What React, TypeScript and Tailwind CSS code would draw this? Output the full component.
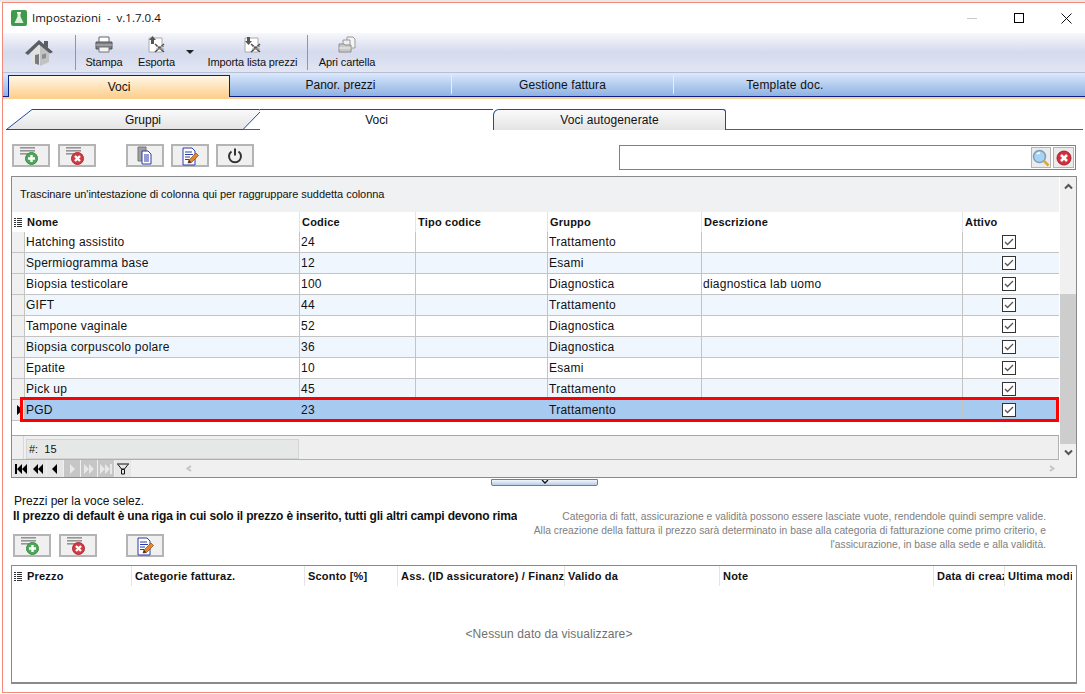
import React from "react";

const font = "font-['Liberation_Sans',Arial,sans-serif]";

const Lines = () => (
  <g fill="#959595">
    <rect x="1" y="1" width="15" height="1.600" />
    <rect x="1" y="4" width="15" height="1.600" />
    <rect x="1" y="7" width="10" height="1.600" />
  </g>
);
const AddIcon = () => (
  <svg width="24" height="20" viewBox="0 0 24 20">
    <Lines />
    <circle cx="12.500" cy="12.500" r="6" fill="#4ea85a" stroke="#3a8a46" />
    <path d="M12.500 9v7M9 12.500h7" stroke="#fff" strokeWidth="2.400" />
  </svg>
);
const DelIcon = () => (
  <svg width="24" height="20" viewBox="0 0 24 20">
    <Lines />
    <circle cx="12.500" cy="12.500" r="6" fill="#d23a44" stroke="#b02a34" />
    <path d="M10 10l5 5M15 10l-5 5" stroke="#fff" strokeWidth="2.400" />
  </svg>
);
const CopyIcon = () => (
  <svg width="20" height="20" viewBox="0 0 20 20">
    <path d="M3 1h8v14H3z" fill="#a0a0a0" stroke="#777" />
    <path d="M7 5h6l3 3v10H7z" fill="#fff" stroke="#2a3aa8" />
    <path d="M9 9h5M9 11h5M9 13h5M9 15h5" stroke="#2a3aa8" />
  </svg>
);
const EditIcon = () => (
  <svg width="20" height="20" viewBox="0 0 20 20">
    <path d="M3 2h9l3 3v14H3z" fill="#fff" stroke="#2a3aa8" />
    <path d="M5 6h7M5 8.500h8M5 11h5M5 13.500h4" stroke="#2a3aa8" />
    <path d="M8 17l1-3 7-7 2.500 2.500-7 7z" fill="#e8842c" stroke="#8a4a12" strokeWidth=".7" />
    <path d="M8 17l1-3 2.500 2.500z" fill="#333" />
  </svg>
);
const PowerIcon = () => (
  <svg width="20" height="20" viewBox="0 0 20 20" fill="none">
    <path d="M6.500 5.500a6 6 0 1 0 7 0" stroke="#333" strokeWidth="2" />
    <path d="M10 2.500v7" stroke="#333" strokeWidth="2" />
  </svg>
);
const HomeIcon = () => (
  <svg width="30" height="30" viewBox="0 0 30 30">
    <path d="M7 13l9-7 9 7v11l-9 4-9-4z" fill="#e2e2e2" />
    <path d="M16 6l9 7v11l-9 4z" fill="#c2c2c2" />
    <path d="M1 15L15 2l14 12-3 1.500L15 6.500 4 17z" fill="#5a5e63" />
    <path d="M20 3h4v7l-4-3z" fill="#5a5e63" />
    <path d="M11 17l4-1v11l-4-1.500z" fill="#777b80" />
    <path d="M18 16.500l4-1v4.500l-4 1z" fill="#8a8e94" />
  </svg>
);
const PrintIcon = () => (
  <svg width="18" height="18" viewBox="0 0 18 18">
    <path d="M4 1h10v6H4z" fill="#fff" stroke="#666" />
    <path d="M1 6h16v7H1z" fill="#7c7f85" stroke="#555" />
    <path d="M1 9h16" stroke="#bbb" />
    <path d="M4 11h10v5H4z" fill="#f4f4f4" stroke="#777" />
  </svg>
);
const XlsIcon = ({ down }: { down?: boolean }) => (
  <svg width="18" height="18" viewBox="0 0 18 18">
    <path d="M1 2h13v14H1z" fill="#fff" stroke="#aaa" />
    <path d={down ? "M3 1h3v4h2L4.500 9 1 5h2z" : "M4.500 0L8 4H6v4H3V4H1z"} fill="#555" />
    <path d="M7 8l9 8M16 8l-9 8" stroke="#555" strokeWidth="1.600" />
    <path d="M8 13h8M8 10.500h8" stroke="#999" />
  </svg>
);
const FolderIcon = () => (
  <svg width="18" height="18" viewBox="0 0 18 18">
    <path d="M9 1h6l2 2v9H9z" fill="#f4f4f4" stroke="#999" />
    <path d="M5 4h7v9H5z" fill="#eee" stroke="#999" />
    <path d="M1 8h5l1 1h6v7H1z" fill="#c9c9c9" stroke="#8c8c8c" />
    <path d="M1 12h12" stroke="#efefef" />
  </svg>
);
const SearchIcon = () => (
  <svg width="18" height="18" viewBox="0 0 18 18">
    <circle cx="7.500" cy="7.500" r="6" fill="#a9d3f5" stroke="#7f9db5" strokeWidth="1.500" />
    <path d="M5 5a3.500 3.500 0 0 1 3-1" stroke="#fff" fill="none" strokeWidth="1.500" />
    <path d="M12 12l4.500 4.500" stroke="#d8a83c" strokeWidth="2.500" />
  </svg>
);
const RedX = () => (
  <svg width="16" height="16" viewBox="0 0 16 16">
    <circle cx="8" cy="8" r="7" fill="#d2303c" stroke="#a5222c" />
    <path d="M5 5l6 6M11 5l-6 6" stroke="#fff" strokeWidth="2.600" />
  </svg>
);
const Chev = ({ d, c = "#555" }: { d: string; c?: string }) => (
  <svg width="9" height="7" viewBox="0 0 9 7" fill="none">
    <path d={d} stroke={c} strokeWidth="2" />
  </svg>
);
const Check = () => (
  <div className="w-[14px] h-[14px] border border-[#333] bg-white flex items-center justify-center">
    <svg width="12" height="12" viewBox="0 0 12 12" fill="none">
      <path d="M2 6l2.500 2.500L10 3" stroke="#555" strokeWidth="1.300" />
    </svg>
  </div>
);
const ColIcon = () => (
  <svg width="8" height="9" viewBox="0 0 8 9" fill="#333">
    <path d="M0 0h2v1H0zM3 0h5v1H3zM0 2h2v1H0zM3 2h5v1H3zM0 4h2v1H0zM3 4h5v1H3zM0 6h2v1H0zM3 6h5v1H3zM0 8h2v1H0zM3 8h5v1H3z" />
  </svg>
);

const Btn = ({ children, className = "" }: { children: React.ReactNode; className?: string }) => (
  <div className={`w-[38px] h-[23px] border-2 border-[#b4b4b4] bg-[#f0f0f0] flex items-center justify-center shrink-0 ${className}`}>
    {children}
  </div>
);

const ToolItem = ({ icon, label, className = "" }: { icon: React.ReactNode; label: string; className?: string }) => (
  <div className={`flex flex-col items-center h-full pt-[3px] ${className}`}>
    <div className="h-[18px] flex items-center justify-center">{icon}</div>
    <div className="text-[11px] tracking-[-0.12px] leading-[13px] mt-[2px] text-[#111] whitespace-nowrap">{label}</div>
  </div>
);

const rows = [
  ["Hatching assistito", "24", "Trattamento", ""],
  ["Spermiogramma base", "12", "Esami", ""],
  ["Biopsia testicolare", "100", "Diagnostica", "diagnostica lab uomo"],
  ["GIFT", "44", "Trattamento", ""],
  ["Tampone vaginale", "52", "Diagnostica", ""],
  ["Biopsia corpuscolo polare", "36", "Diagnostica", ""],
  ["Epatite", "10", "Esami", ""],
  ["Pick up", "45", "Trattamento", ""],
  ["PGD", "23", "Trattamento", ""],
];

const cols = "grid grid-cols-[12px_275px_116px_132px_154px_261px_97px]";

const NavBtn = ({ d, on }: { d: string; on?: boolean }) => (
  <div className={`w-[16px] h-full ml-px flex items-center justify-center ${on ? "bg-[#e6e6e6]" : "bg-[#c6c6c6]"}`}>
    <svg width="12" height="10" viewBox="0 0 12 10" fill={on ? "#000" : "#e8e8e8"}>
      <path d={d} />
    </svg>
  </div>
);

export default function App() {
  return (
    <div className={`${font} w-[1085px] h-[694px] bg-white overflow-hidden text-[#111]`}>
      <div className="h-[2px] bg-[#e8e8e8]" />
      <div className="ml-[2px] h-[691px] border-t border-l border-b border-[#f48a7c] bg-white flex flex-col">
        {/* title bar */}
        <div className="h-[30px] shrink-0 flex items-center pl-[8px]">
          <svg width="16" height="16" viewBox="0 0 16 16">
            <rect width="16" height="16" rx="2" fill="#3f9a4b" />
            <path d="M6.500 3h3v3.500L12.500 13h-9L6.500 6.500z" fill="#dff0df" />
            <path d="M6 2h4v1.500H6z" fill="#fff" />
          </svg>
          <span className="ml-[5px] text-[11.500px] font-['Open_Sans',sans-serif] whitespace-pre">Impostazioni  -  v.1.7.0.4</span>
          <div className="ml-auto flex items-center pr-[13px] gap-[37px]">
            <div className="w-[10px] h-px bg-[#c8c8c8]" />
            <div className="w-[10px] h-[10px] border border-black" />
            <svg width="11" height="11" viewBox="0 0 11 11" stroke="#111" fill="none">
              <path d="M.5.5l10 10M10.500.5l-10 10" />
            </svg>
          </div>
        </div>
        {/* toolbar */}
        <div className="h-[40px] shrink-0 border-b border-[#b8bfd6] bg-gradient-to-b from-[#f7f8fc] via-[#d5daed] to-[#e2e6f3] flex items-stretch">
          <div className="w-[72px] flex items-center justify-center">
            <HomeIcon />
          </div>
          <div className="w-px my-[2px] bg-[#8f96a6]" />
          <ToolItem icon={<PrintIcon />} label="Stampa" className="w-[36px] ml-[10px]" />
          <ToolItem icon={<XlsIcon />} label="Esporta" className="w-[37px] ml-[16px]" />
          <div className="ml-[11px] mt-[17px] w-0 h-0 border-x-[4px] border-x-transparent border-t-[4px] border-t-[#222]" />
          <ToolItem icon={<XlsIcon down />} label="Importa lista prezzi" className="w-[91px] ml-[13px]" />
          <div className="w-px my-[2px] ml-[9px] bg-[#8f96a6]" />
          <ToolItem icon={<FolderIcon />} label="Apri cartella" className="w-[58px] ml-[10px]" />
        </div>
        {/* main tabs */}
        <div className="h-[26px] shrink-0 border-b-2 border-[#fbd18f] bg-white">
          <div className="h-full pl-[5px] border-b border-[#0a1f8a] bg-gradient-to-b from-[#dbe9fc] to-[#8fb2e2] flex items-stretch text-[12px]">
            <div className="w-[222px] mt-[2px] -mb-px border-x border-t border-[#0a1f8a] bg-gradient-to-b from-[#fff7e6] to-[#fdd08f] flex items-center justify-center">Voci</div>
            <div className="w-[222px] flex items-center justify-center border-r border-[#e4eefc] my-[2px]">Panor. prezzi</div>
            <div className="w-[222px] flex items-center justify-center border-r border-[#e4eefc] my-[2px] tracking-[0.1px]">Gestione fattura</div>
            <div className="w-[222px] flex items-center justify-center tracking-[0.2px]">Template doc.</div>
          </div>
        </div>
        {/* sub tabs */}
        <div className="mt-[10px] h-[21px] shrink-0 ml-[3px] mr-[2px] border-b border-[#3a5ea8] flex text-[12px]">
          <div className="w-[254px] relative flex items-center justify-center -mb-px">
            <svg className="absolute inset-0" width="256" height="21" viewBox="0 0 256 21">
              <defs>
                <linearGradient id="g" x1="0" y1="0" x2="0" y2="1">
                  <stop offset="0" stopColor="#fafafa" />
                  <stop offset="1" stopColor="#e4e4e4" />
                </linearGradient>
              </defs>
              <path d="M.5 20.500L26 .5h227l2 1.500L237 20.500z" fill="url(#g)" stroke="#1e4aa0" />
            </svg>
            <span className="relative pl-[20px]">Gruppi</span>
          </div>
          <div className="w-[233px] relative flex items-center justify-center -mb-px bg-white border-t border-[#1e4aa0]">Voci</div>
          <div className="w-[233px] -mb-px border-x border-t border-[#1e4aa0] rounded-tr-[3px] rounded-tl-[6px] bg-gradient-to-b from-[#fafafa] to-[#e4e4e4] flex items-center justify-center tracking-[0.1px]">Voci autogenerate</div>
        </div>
        {/* action row */}
        <div className="mt-[14px] h-[26px] shrink-0 flex items-start pl-[9px] pr-[9px]">
          <Btn><AddIcon /></Btn>
          <Btn className="ml-[8px]"><DelIcon /></Btn>
          <Btn className="ml-[30px]"><CopyIcon /></Btn>
          <Btn className="ml-[7px]"><EditIcon /></Btn>
          <Btn className="ml-[7px]"><PowerIcon /></Btn>
          <div className="ml-auto mt-px w-[457px] h-[25px] border border-[#808080] bg-white flex items-center justify-end pr-[1px] gap-[2px]">
            <div className="w-[20px] h-[21px] border border-[#b4b4b4] bg-[#ececec] flex items-center justify-center"><SearchIcon /></div>
            <div className="w-[21px] h-[21px] border border-[#b4b4b4] bg-[#ececec] flex items-center justify-center"><RedX /></div>
          </div>
        </div>
        {/* upper grid */}
        <div className="mt-[6px] ml-[8px] w-[1066px] h-[302px] shrink-0 border border-[#8a8a8a] flex flex-col bg-white">
          <div className="flex flex-1 min-h-0">
            <div className="w-[1048px] flex flex-col min-h-0">
              <div className="h-[35px] shrink-0 bg-[#f0f1f3] flex items-center pl-[8px] text-[11px] tracking-[-0.04px]">Trascinare un'intestazione di colonna qui per raggruppare suddetta colonna</div>
              <div className={`${cols} h-[20px] shrink-0 text-[11px] tracking-[0.2px] font-bold items-center`}>
                <div className="pl-[2px]"><ColIcon /></div>
                <div className="pl-[3px] h-full flex items-center">Nome</div>
                <div className="pl-[2px] h-full flex items-center border-l border-[#e4e4e4]">Codice</div>
                <div className="pl-[2px] h-full flex items-center border-l border-[#e4e4e4]">Tipo codice</div>
                <div className="pl-[2px] h-full flex items-center border-l border-[#e4e4e4]">Gruppo</div>
                <div className="pl-[2px] h-full flex items-center border-l border-[#e4e4e4]">Descrizione</div>
                <div className="pl-[2px] h-full flex items-center border-l border-[#e4e4e4]">Attivo</div>
              </div>
              {rows.map((r, i) => {
                const sel = i === 8;
                const bg = sel ? "bg-[#a6caf0]" : i % 2 === 1 || i === 7 ? "bg-[#f0f6fd]" : "bg-white";
                const cell = `h-full flex items-center pl-[1px] border-l border-[#c4c4c4] ${bg}`;
                return (
                  <div key={i} className={`${cols} h-[21px] shrink-0 text-[12px] tracking-[0.25px] border-b border-[#c4c4c4] relative`}>
                    <div className="bg-[#f0f0f0] flex items-center justify-center">
                      {sel && <div className="w-0 h-0 border-y-[5px] border-y-transparent border-l-[6px] border-l-black ml-[4px]" />}
                    </div>
                    <div className={cell}>{r[0]}</div>
                    <div className={cell}>{r[1]}</div>
                    <div className={cell} />
                    <div className={cell}>{r[2]}</div>
                    <div className={cell}>{r[3]}</div>
                    <div className={`${cell} justify-center pr-[6px]`}><Check /></div>
                    {sel && <div className="absolute left-[8px] top-[-3px] w-[1039px] h-[25px] border-[3px] border-[#ff0000] pointer-events-none" />}
                  </div>
                );
              })}
              <div className="flex-1 border-b border-[#a8a8a8]" />
              <div className="h-[24px] shrink-0 bg-[#efefef] border-b border-r border-[#b0b0b0] flex">
                <div className="w-[12px] border-r border-[#d8d8d8]" />
                <div className="ml-[2px] mt-[3px] w-[273px] h-[20px] bg-[#e6e8e8] border border-[#d4d4d4] flex items-center pl-[2px] text-[11px] whitespace-pre">#:  15</div>
              </div>
            </div>
            <div className="w-[16px] ml-px bg-[#f0f0f0] flex flex-col items-center">
              <div className="h-[15px] flex items-center justify-center pt-[3px]"><Chev d="M1 5.500l3.500-3.500 3.500 3.500" /></div>
              <div className="h-[102px]" />
              <div className="w-full h-[150px] bg-[#cdcdcd]" />
              <div className="flex-1 flex items-center justify-center"><Chev d="M1 1.500l3.500 3.500 3.500-3.500" /></div>
            </div>
          </div>
          <div className="h-[17px] shrink-0 bg-[#f0f0f0] flex items-center">
            <NavBtn on d="M0 0h2v10H0zM7 0v10L2 5zM12 0v10L7 5z" />
            <NavBtn on d="M6 0v10L1 5zM11 0v10L6 5z" />
            <NavBtn on d="M8 0v10L3 5z" />
            <NavBtn d="M4 0v10l5-5z" />
            <NavBtn d="M1 0v10l5-5zM6 0v10l5-5z" />
            <NavBtn d="M0 0v10l5-5zM5 0v10l5-5zM10 0h2v10h-2z" />
            <div className="w-[16px] h-full ml-px bg-[#e6e6e6] flex items-center justify-center">
              <svg width="14" height="12" viewBox="0 0 14 12" fill="none" stroke="#111">
                <path d="M1 1h12M2 1.500L5.500 6h3L12 1.500M5.500 6.500h3V11h-3z" />
              </svg>
            </div>
            <div className="ml-[54px]"><Chev d="M6 1L2.500 3.500 6 6" c="#c4c4c4" /></div>
            <div className="ml-auto mr-[20px]"><Chev d="M3 1l3.500 2.500L3 6" c="#c4c4c4" /></div>
          </div>
        </div>
        {/* splitter */}
        <div className="mt-px h-[7px] shrink-0 ml-[488px] w-[107px] rounded-b-[2px] border border-[#6f7f96] bg-gradient-to-b from-[#f4f8fc] to-[#b8cce4] flex items-start justify-center">
          <svg width="8" height="4" viewBox="0 0 8 4" fill="none"><path d="M1 0l3 3 3-3" stroke="#111" strokeWidth="1.300" /></svg>
        </div>
        {/* lower info */}
        <div className="h-[79px] shrink-0 flex">
          <div className="w-[514px] shrink-0 overflow-hidden pl-[11px] pt-[8px] whitespace-nowrap">
            <div className="text-[12px] leading-[15px]">Prezzi per la voce selez.</div>
            <div className="text-[12px] leading-[15px] tracking-[-0.16px] font-bold -ml-px">Il prezzo di default è una riga in cui solo il prezzo è inserito, tutti gli altri campi devono rimanere vuoti.</div>
            <div className="flex mt-[10px] ml-[-1px]">
              <Btn><AddIcon /></Btn>
              <Btn className="ml-[8px]"><DelIcon /></Btn>
              <Btn className="ml-[29px]"><EditIcon /></Btn>
            </div>
          </div>
          <div className="flex-1 pt-[24px] pr-[39px] text-right text-[10.300px] leading-[14px] text-[#808080] whitespace-nowrap">
            <div>Categoria di fatt, assicurazione e validità possono essere lasciate vuote, rendendole quindi sempre valide.</div>
            <div>Alla creazione della fattura il prezzo sarà determinato in base alla categoria di fatturazione come primo criterio, e</div>
            <div>l'assicurazione, in base alla sede e alla validità.</div>
          </div>
        </div>
        {/* lower grid */}
        <div className="ml-[8px] w-[1066px] h-[119px] shrink-0 border border-[#8a8a8a] border-b-2 bg-white flex flex-col">
          <div className="grid grid-cols-[12px_107px_173px_93px_167px_155px_214px_71px_68px] h-[20px] shrink-0 text-[11px] tracking-[0.2px] font-bold items-center whitespace-nowrap">
            <div className="pl-[2px]"><ColIcon /></div>
            {["Prezzo", "Categorie fatturaz.", "Sconto [%]", "Ass. (ID assicuratore) / Finanziatore", "Valido da", "Note", "Data di creazione", "Ultima modifica"].map((h, i) => (
              <div key={h} className={`pl-[3px] h-full flex items-center overflow-hidden ${i ? "border-l border-[#e4e4e4]" : ""}`}>{h}</div>
            ))}
          </div>
          <div className="flex-1 flex items-center justify-center pl-[10px] text-[12px] tracking-[0.1px] text-[#707070]">&lt;Nessun dato da visualizzare&gt;</div>
        </div>
      </div>
    </div>
  );
}
